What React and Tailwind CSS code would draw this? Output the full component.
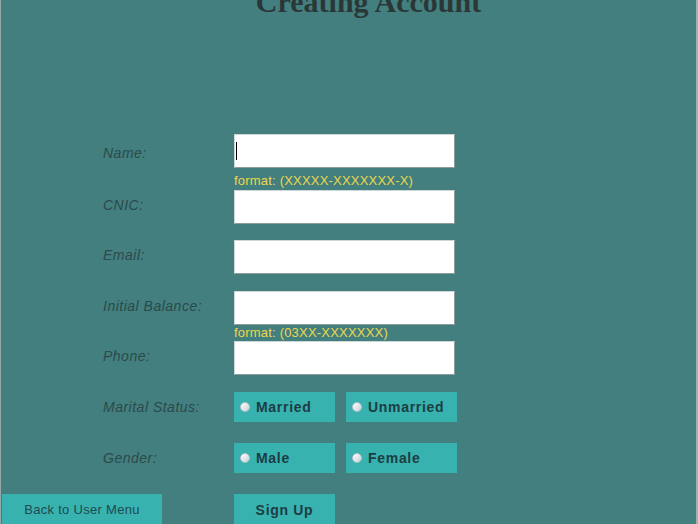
import { useState } from 'react';

const labelCls = "w-[131px] shrink-0 italic text-[14px] tracking-[0.5px] text-[#2b4a4c] font-['Liberation_Sans',Arial,sans-serif]";
const inputCls = "w-[221px] h-[34px] bg-white border border-t-[#cfd6d6] border-l-[#cfd6d6] border-b-[#8a9c9c] border-r-[#8a9c9c] outline-none px-1 text-[14px]";
const hintCls = "pl-[233px] text-[13px] tracking-[0.2px] text-[#ecd84a] font-['Liberation_Sans',Arial,sans-serif]";

const Row = ({ label, shift, children }) => (
    <div className="flex items-center h-[34px] pl-[102px]">
        <span className={labelCls} style={{ marginTop: shift }}>{label}</span>
        {children}
    </div>
);

const Radio = ({ label, width, checked, onClick }) => (
    <button
        type="button"
        onClick={onClick}
        className={`${width} h-[30px] bg-[#37b2af] flex items-center pl-[6px] gap-[6px] text-left`}
    >
        <span className="w-[10px] h-[10px] rounded-full bg-gradient-to-br from-white to-[#c8d0d8] border border-[#b8c4c8] flex items-center justify-center">
            {checked && <span className="w-[4px] h-[4px] rounded-full bg-[#334]" />}
        </span>
        <span className="text-[14px] font-bold tracking-[0.7px] text-[#1c3d43] font-['Liberation_Sans',Arial,sans-serif]">{label}</span>
    </button>
);

const App = () => {
    const [marital, setMarital] = useState('');
    const [gender, setGender] = useState('');

    return (
        <div className="w-[698px] h-[524px] overflow-hidden bg-[#437f7e] border-l border-l-[#95a8a7] border-r-2 border-r-[#9fb2b1] flex flex-col">
            <h1 className="mt-[-13px] h-[30px] leading-[30px] pl-[40px] text-center text-[30px] font-bold text-[#2b3737] font-['Liberation_Serif','Times_New_Roman',serif]">
                Creating Account
            </h1>

            <div className="mt-[117px] flex flex-col">
                <Row label="Name:" shift="4px">
                    <div className="relative">
                        <input className={inputCls} autoFocus />
                        <span className="absolute left-[2px] top-[8px] w-[1px] h-[18px] bg-black" />
                    </div>
                </Row>
                <div className={`${hintCls} h-[22px] leading-[26px]`}>format: (XXXXX-XXXXXXX-X)</div>
                <Row label="CNIC:" shift="-4px">
                    <input className={inputCls} />
                </Row>
                <div className="h-[16px]" />
                <Row label="Email:" shift="-3px">
                    <input className={inputCls} />
                </Row>
                <div className="h-[17px]" />
                <Row label="Initial Balance:" shift="-4px">
                    <input className={inputCls} />
                </Row>
                <div className={`${hintCls} h-[16px] leading-[16px]`}>format: (03XX-XXXXXXX)</div>
                <Row label="Phone:" shift="-3px">
                    <input className={inputCls} />
                </Row>

                <div className="flex items-center h-[30px] pl-[102px] mt-[17px]">
                    <span className={labelCls}>Marital Status:</span>
                    <div className="flex gap-[11px]">
                        <Radio label="Married" width="w-[101px]" checked={marital === 'm'} onClick={() => setMarital('m')} />
                        <Radio label="Unmarried" width="w-[111px]" checked={marital === 'u'} onClick={() => setMarital('u')} />
                    </div>
                </div>
                <div className="flex items-center h-[30px] pl-[102px] mt-[21px]">
                    <span className={labelCls}>Gender:</span>
                    <div className="flex gap-[11px]">
                        <Radio label="Male" width="w-[101px]" checked={gender === 'm'} onClick={() => setGender('m')} />
                        <Radio label="Female" width="w-[111px]" checked={gender === 'f'} onClick={() => setGender('f')} />
                    </div>
                </div>

                <div className="flex mt-[21px] pl-[1px]">
                    <button className="w-[160px] h-[32px] bg-[#37b2af] text-[13px] tracking-[0.3px] text-[#1e4a50] font-['Liberation_Sans',Arial,sans-serif]">
                        Back to User Menu
                    </button>
                    <button className="ml-[72px] w-[101px] h-[32px] bg-[#37b2af] text-[14px] font-bold tracking-[0.7px] text-[#1c3d43] font-['Liberation_Sans',Arial,sans-serif]">
                        Sign Up
                    </button>
                </div>
            </div>
        </div>
    );
};

export default App;
